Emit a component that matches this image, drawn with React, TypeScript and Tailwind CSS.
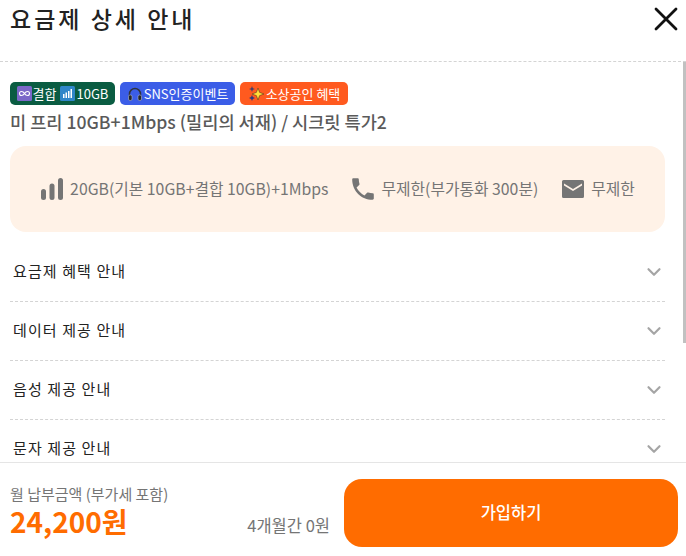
import { ChevronDown } from "lucide-react";

const FONT = "font-['Noto_Sans_CJK_KR','Noto_Sans',sans-serif]";

const sections = ["요금제 혜택 안내", "데이터 제공 안내", "음성 제공 안내", "문자 제공 안내"];

const InfinityIcon = () => (
  <svg width="15" height="15" viewBox="0 0 15 15" className="shrink-0">
    <rect width="15" height="15" rx="1.5" fill="#7b68c8" />
    <path d="M7.5 7.5c-1-1.6-2-2-3-2a2 2 0 0 0 0 4c1 0 2-.4 3-2s2-2 3-2a2 2 0 0 1 0 4c-1 0-2-.4-3-2z" fill="none" stroke="#fff" strokeWidth="1.1" />
  </svg>
);

const SignalIcon = () => (
  <svg width="15" height="15" viewBox="0 0 15 15" className="shrink-0">
    <rect width="15" height="15" rx="1.5" fill="#2f86c9" />
    <path d="M3 8h1.5v4H3zM5.5 6.500H7V12H5.500zM8 5h1.500v7H8zM10.500 3H12v9h-1.500z" fill="#fff" />
  </svg>
);

const HeadphoneIcon = () => (
  <svg width="16" height="16" viewBox="0 0 16 16" className="shrink-0">
    <path d="M2.500 10V8a5.500 5.500 0 0 1 11 0v2" fill="none" stroke="#30343c" strokeWidth="1.500" />
    <rect x="1.500" y="9" width="3.500" height="5.500" rx="1.500" fill="#23262c" stroke="#c9ccd4" strokeWidth=".5" />
    <rect x="11" y="9" width="3.500" height="5.500" rx="1.500" fill="#23262c" stroke="#c9ccd4" strokeWidth=".5" />
  </svg>
);

const SparkleIcon = () => (
  <svg width="17" height="17" viewBox="0 0 17 17" className="shrink-0">
    <path d="M4 1l.8 2.200L7 4 4.800 4.800 4 7l-.8-2.200L1 4l2.200-.8z" fill="#3a3f6e" />
    <path d="M4 10l.9 2.100L7 13l-2.100.9L4 16l-.9-2.100L1 13l2.100-.9z" fill="#2f3a7e" />
    <path d="M10 3l1.600 4.400L16 9l-4.400 1.600L10 15l-1.600-4.400L4 9l4.400-1.600z" fill="#ffe13a" stroke="#5a3a20" strokeWidth=".6" />
  </svg>
);

const SignalBars = () => (
  <svg width="24" height="24" viewBox="0 0 24 24" className="shrink-0">
    <rect x="1" y="12" width="5" height="11" rx="2.500" fill="#757575" />
    <rect x="9.500" y="6.500" width="5" height="16.500" rx="2.500" fill="#757575" />
    <rect x="18" y="1" width="5" height="22" rx="2.500" fill="#757575" />
  </svg>
);

const PhoneIcon = () => (
  <svg width="24" height="24" viewBox="2 2 20 20" className="shrink-0">
    <path
      d="M6.620 10.790c1.440 2.830 3.760 5.140 6.590 6.590l2.200-2.200c.27-.27.670-.36 1.020-.24 1.120.37 2.330.57 3.570.57.550 0 1 .45 1 1V20c0 .55-.45 1-1 1-9.390 0-17-7.610-17-17 0-.55.450-1 1-1h3.500c.55 0 1 .45 1 1 0 1.250.2 2.450.57 3.570.11.350.03.740-.25 1.020l-2.200 2.200z"
      fill="#757575"
    />
  </svg>
);

const MailIcon = () => (
  <svg width="24" height="20" viewBox="0 0 24 20" className="shrink-0">
    <path
      d="M2.500 1h19A1.500 1.500 0 0 1 23 2.500v15a1.500 1.500 0 0 1-1.500 1.500h-19A1.500 1.500 0 0 1 1 17.500v-15A1.500 1.500 0 0 1 2.500 1zM3 4.500v2l9 5.500 9-5.500v-2l-9 5.500z"
      fill="#757575"
      fillRule="evenodd"
    />
  </svg>
);

export default function App() {
  return (
    <div className={`${FONT} relative flex h-[556px] w-[686px] flex-col overflow-hidden bg-white`}>
      <header className="flex h-[62px] shrink-0 items-start justify-between border-b border-dashed border-[#d4d4d4] pl-[10px] pr-[8px]">
        <h1 className="mt-[3px] text-[23px] leading-[30px] font-medium tracking-[3px] text-[#222]">요금제 상세 안내</h1>
        <svg width="24" height="24" viewBox="0 0 24 24" className="mt-[7px]">
          <path d="M2 2l20 20M22 2L2 22" stroke="#111" strokeWidth="2.800" strokeLinecap="round" />
        </svg>
      </header>

      <main className="min-h-0 flex-1 overflow-hidden px-[10px] pr-[21px]">
        <div className="mt-[20px] flex gap-[5px] text-[13px] leading-[23px] text-white">
          <span className="flex h-[23px] w-[105px] items-center justify-center gap-[1px] rounded-[5px] bg-[#0a5c42]">
            <InfinityIcon />
            결합
            <span className="w-[2px]" />
            <SignalIcon />
            10GB
          </span>
          <span className="flex h-[23px] w-[115px] items-center justify-center gap-[1px] rounded-[5px] bg-[#3b5de7]">
            <HeadphoneIcon />
            SNS인증이벤트
          </span>
          <span className="flex h-[23px] w-[108px] items-center justify-center gap-[1px] rounded-[5px] bg-[#ff5a1f]">
            <SparkleIcon />
            소상공인 혜택
          </span>
        </div>
        <h2 className="mt-[4px] text-[17.600px] leading-[26px] font-medium text-[#5a5a5a]">
          미 프리 10GB+1Mbps (밀리의 서재) / 시크릿 특가2
        </h2>

        <div className="mt-[11px] flex h-[86px] items-center justify-center gap-[23px] rounded-[16px] bg-[#fff2e7] text-[15.800px] text-[#757575]">
          <span className="flex items-center gap-[6px]">
            <SignalBars />
            20GB(기본 10GB+결합 10GB)+1Mbps
          </span>
          <span className="flex items-center gap-[6px]">
            <PhoneIcon />
            무제한(부가통화 300분)
          </span>
          <span className="flex items-center gap-[6px]">
            <MailIcon />
            무제한
          </span>
        </div>

        <ul className="mt-[11px]">
          {sections.map((title) => (
            <li
              key={title}
              className="flex h-[59px] items-center justify-between border-b border-dashed border-[#d4d4d4] pl-[3px] text-[15px] tracking-[1.100px] text-[#222]"
            >
              <span className="-mt-[1px]">{title}</span>
              <ChevronDown size={22} strokeWidth={2.400} className="text-[#a5a5a5]" />
            </li>
          ))}
        </ul>
      </main>

      <footer className="flex h-[94px] shrink-0 items-center border-t border-[#e5e5e5] pt-[6px] pr-[8px] pl-[10px]">
        <div className="-mt-[4px] flex-1">
          <p className="text-[15px] leading-[20px] text-[#757575]">월 납부금액 (부가세 포함)</p>
          <p className="text-[28px] leading-[34px] font-bold text-[#ff6c00]">24,200원</p>
        </div>
        <span className="mt-[25px] mr-[14px] text-[16.500px] text-[#757575]">4개월간 0원</span>
        <button className="h-[68px] w-[334px] rounded-[18px] bg-[#ff6c00] text-[16.500px] font-medium text-white">
          가입하기
        </button>
      </footer>

      <div className="absolute top-[62px] right-0 h-[281px] w-[3px] bg-[#c1c1c1]" />
    </div>
  );
}
